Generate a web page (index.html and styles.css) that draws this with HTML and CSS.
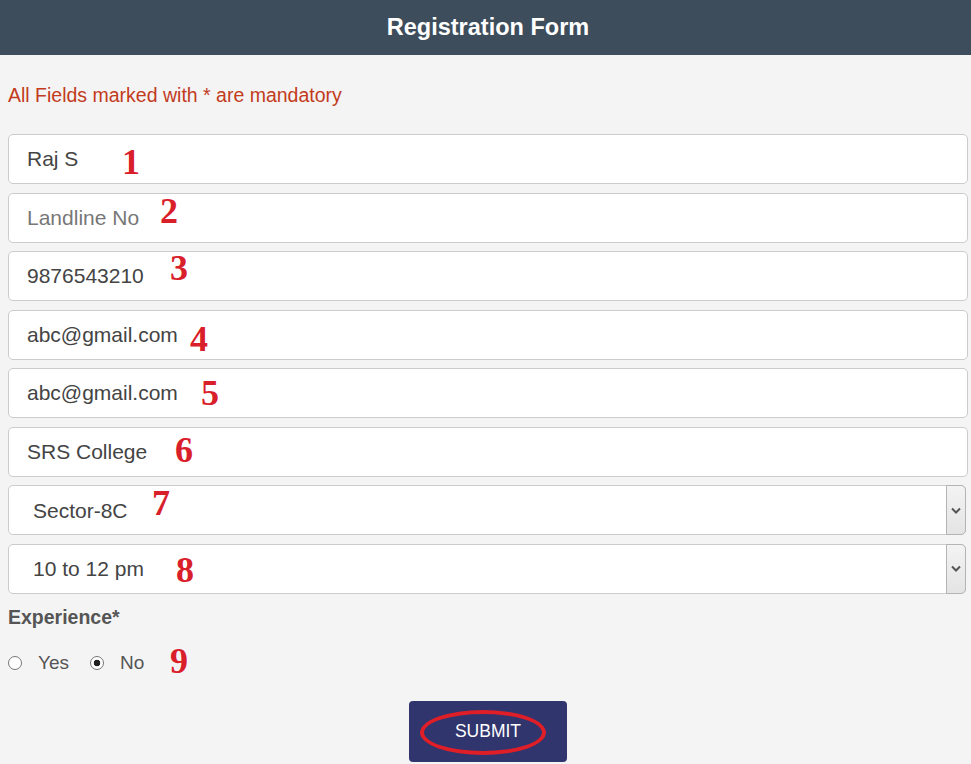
FILE: index.html
```html
<!DOCTYPE html>
<html lang="en">
<head>
    <meta charset="UTF-8">
    <meta name="viewport" content="width=device-width, initial-scale=1.0">
    <title>Registration Form</title>
    <link rel="stylesheet" href="styles.css">
</head>
<body>

    <header class="topbar">
        <h1>Registration Form</h1>
    </header>

    <form class="reg-form" id="regForm">
        <p class="note">All Fields marked with * are mandatory</p>

        <div class="field">
            <input type="text" id="fullName" value="Raj S">
            <span class="mark mark-1">1</span>
        </div>
        <div class="field">
            <input type="text" id="landline" placeholder="Landline No">
            <span class="mark mark-2">2</span>
        </div>
        <div class="field">
            <input type="text" id="mobile" value="9876543210">
            <span class="mark mark-3">3</span>
        </div>
        <div class="field">
            <input type="text" id="email" value="abc@gmail.com">
            <span class="mark mark-4">4</span>
        </div>
        <div class="field">
            <input type="text" id="confirmEmail" value="abc@gmail.com">
            <span class="mark mark-5">5</span>
        </div>
        <div class="field">
            <input type="text" id="college" value="SRS College">
            <span class="mark mark-6">6</span>
        </div>

        <div class="field select-field">
            <select id="sector">
                <option>Sector-8C</option>
            </select>
            <span class="select-btn">
                <svg width="10" height="7" viewBox="0 0 10 7"><path d="M1 1.5 L5 5.5 L9 1.5" fill="none" stroke="#555" stroke-width="2"/></svg>
            </span>
            <span class="mark mark-7">7</span>
        </div>
        <div class="field select-field">
            <select id="slot">
                <option>10 to 12 pm</option>
            </select>
            <span class="select-btn">
                <svg width="10" height="7" viewBox="0 0 10 7"><path d="M1 1.5 L5 5.5 L9 1.5" fill="none" stroke="#555" stroke-width="2"/></svg>
            </span>
            <span class="mark mark-8">8</span>
        </div>

        <div class="group-label">Experience*</div>
        <div class="radio-row">
            <label class="radio"><input type="radio" name="experience"> Yes</label>
            <label class="radio"><input type="radio" name="experience" checked> No</label>
            <span class="mark mark-9">9</span>
        </div>

        <div class="actions">
            <button type="button" class="submit">SUBMIT<span class="ring"></span></button>
        </div>
    </form>

</body>
</html>
```

FILE: styles.css
```css
body {
    font-family: "Liberation Sans", Arial, sans-serif;
    margin: 0;
    background-color: #f4f4f4;
    color: #444;
}
.topbar {
    background-color: #3d4d5c;
    height: 55px;
    display: flex;
    align-items: center;
    justify-content: center;
    padding-left: 5px;
}
.topbar h1 {
    margin: 0;
    color: #fff;
    font-size: 23.5px;
    font-weight: bold;
}
.reg-form {
    padding: 0 3px 0 8px;
}
.note {
    margin: 28px 0 27px;
    color: #c23b1c;
    font-size: 19.5px;
    line-height: 24px;
}
.field {
    position: relative;
    height: 50px;
    margin-bottom: 8.5px;
}
.field input[type="text"], .field select {
    width: 100%;
    height: 50px;
    box-sizing: border-box;
    border: 1px solid #ccc;
    border-radius: 5px;
    background-color: #fff;
    font-family: "Liberation Sans", Arial, sans-serif;
    font-size: 21px;
    color: #444;
    padding: 0 18px;
    outline: none;
}
.field input::placeholder {
    color: #777;
}
.select-field select {
    -webkit-appearance: none;
    appearance: none;
    width: calc(100% - 2px);
    padding-left: 24px;
}
.select-btn {
    position: absolute;
    top: 0;
    right: 2px;
    width: 20px;
    height: 50px;
    box-sizing: border-box;
    border: 1px solid #b4b4b4;
    border-radius: 0 5px 5px 0;
    background: linear-gradient(#f3f3f3, #e4e4e4);
    display: flex;
    align-items: center;
    justify-content: center;
    pointer-events: none;
}
.mark {
    position: absolute;
    font-family: "Liberation Serif", "Times New Roman", serif;
    font-size: 36px;
    font-weight: bold;
    line-height: 36px;
    color: #d9202a;
}
.mark-1 { left: 114px; top: 10px; }
.mark-2 { left: 152px; top: 0; }
.mark-3 { left: 162px; top: -1px; }
.mark-4 { left: 182px; top: 11px; }
.mark-5 { left: 193px; top: 7px; }
.mark-6 { left: 167px; top: 5px; }
.mark-7 { left: 144px; top: 0; }
.mark-8 { left: 168px; top: 8px; }
.mark-9 { left: 162px; top: -8px; }
.group-label {
    margin-top: 11px;
    font-size: 19.5px;
    line-height: 24px;
    font-weight: bold;
    color: #555;
}
.radio-row {
    position: relative;
    margin-top: 22px;
    height: 24px;
    display: flex;
    align-items: center;
    font-size: 19px;
    color: #555;
}
.radio {
    display: inline-flex;
    align-items: center;
    gap: 16px;
    margin-right: 21px;
}
.radio input[type="radio"] {
    -webkit-appearance: none;
    appearance: none;
    width: 14px;
    height: 14px;
    margin: 0;
    border: 1px solid #777;
    border-radius: 50%;
    background-color: #fff;
}
.radio input[type="radio"]:checked {
    background: radial-gradient(circle, #222 0 3px, #fff 3.6px);
}
.actions {
    margin-top: 26px;
    display: flex;
    justify-content: center;
}
.submit {
    position: relative;
    width: 158px;
    height: 61px;
    background-color: #30356d;
    color: #fff;
    border: none;
    border-radius: 4px;
    font-family: "Liberation Sans", Arial, sans-serif;
    font-size: 17.5px;
    cursor: pointer;
}
.submit .ring {
    position: absolute;
    left: 11px;
    top: 9px;
    width: 126px;
    height: 45px;
    box-sizing: border-box;
    border: 4px solid #e01e27;
    border-radius: 50%;
}
```
